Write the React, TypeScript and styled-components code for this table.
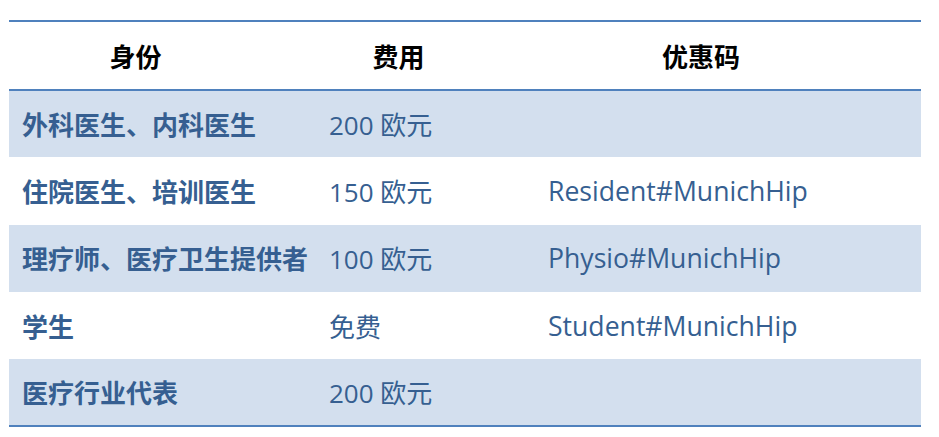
import styled, { createGlobalStyle } from "styled-components";

const GlobalStyle = createGlobalStyle`
  body {
    margin: 0;
    background: #ffffff;
    font-family: "Open Sans", "Noto Sans CJK SC", sans-serif;
  }
`;

const Wrapper = styled.div`
  padding: 20px 0 0 9px;
`;

const Table = styled.table`
  width: 912px;
  border-collapse: collapse;
  table-layout: fixed;
  border-top: 2px solid #4f81bd;
  border-bottom: 2px solid #4f81bd;
`;

const HeadRow = styled.tr`
  height: 69px;
  border-bottom: 2px solid #4f81bd;
`;

const HeadCell = styled.th<{ $width: number }>`
  box-sizing: border-box;
  width: ${({ $width }) => $width}px;
  padding: 0 67px 0 13px;
  text-align: center;
  font-family: "Noto Sans CJK SC", sans-serif;
  font-size: 26px;
  font-weight: 700;
  color: #000000;
`;

const Row = styled.tr<{ $shaded: boolean }>`
  height: 67.3px;
  background: ${({ $shaded }) => ($shaded ? "#d3dfee" : "#ffffff")};
`;

const Cell = styled.td<{ $bold?: boolean; $code?: boolean }>`
  padding: 0 8px 0 13px;
  white-space: nowrap;
  font-family: "Open Sans", "Noto Sans CJK SC", sans-serif;
  font-size: ${({ $code }) => ($code ? "26.6px" : "26px")};
  font-weight: ${({ $bold }) => ($bold ? 700 : 400)};
  color: #365f91;
`;

const rows = [
  { role: "外科医生、内科医生", fee: "200 欧元", code: "" },
  { role: "住院医生、培训医生", fee: "150 欧元", code: "Resident#MunichHip" },
  { role: "理疗师、医疗卫生提供者", fee: "100 欧元", code: "Physio#MunichHip" },
  { role: "学生", fee: "免费", code: "Student#MunichHip" },
  { role: "医疗行业代表", fee: "200 欧元", code: "" },
];

export default function App() {
  return (
    <>
      <GlobalStyle />
      <Wrapper>
        <Table>
          <thead>
            <HeadRow>
              <HeadCell $width={307}>身份</HeadCell>
              <HeadCell $width={219}>费用</HeadCell>
              <HeadCell $width={386}>优惠码</HeadCell>
            </HeadRow>
          </thead>
          <tbody>
            {rows.map((r, i) => (
              <Row key={r.role} $shaded={i % 2 === 0}>
                <Cell $bold>{r.role}</Cell>
                <Cell>{r.fee}</Cell>
                <Cell $code>{r.code}</Cell>
              </Row>
            ))}
          </tbody>
        </Table>
      </Wrapper>
    </>
  );
}
